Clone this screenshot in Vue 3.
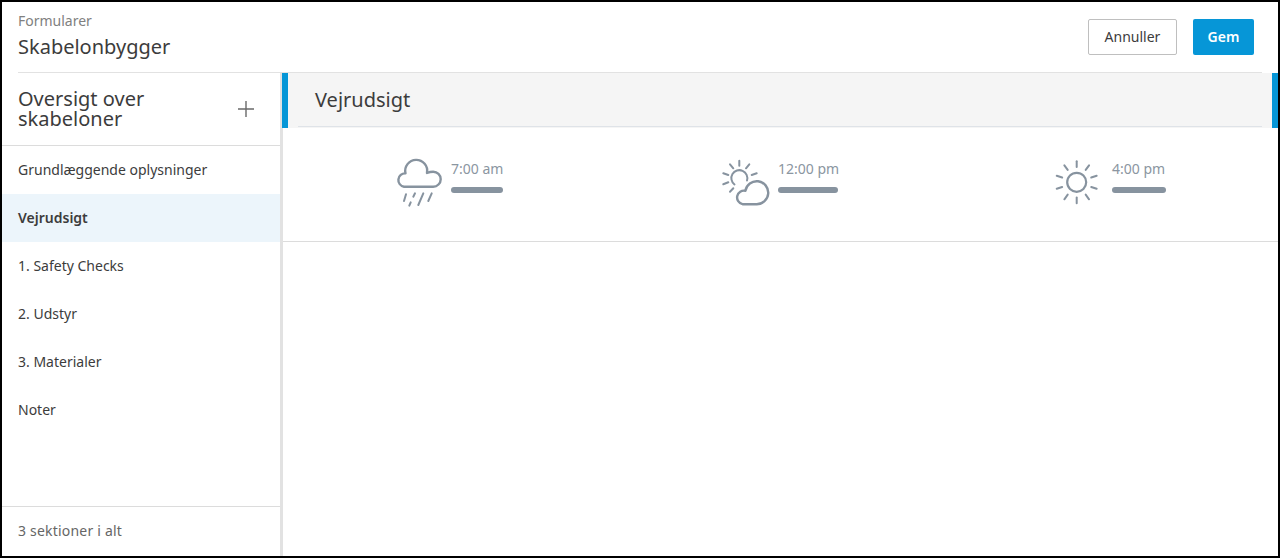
<script setup>
const sections = [
  { name: 'Grundlæggende oplysninger' },
  { name: 'Vejrudsigt', active: true },
  { name: '1. Safety Checks' },
  { name: '2. Udstyr' },
  { name: '3. Materialer' },
  { name: 'Noter' }
]

// ti stråler, 36 grader imellem
const sunRays = [0, 36, 72, 108, 144, 180, 216, 252, 288, 324]
</script>

<template>
  <div class="page">
    <header class="top">
      <div class="titles">
        <div class="crumb">Formularer</div>
        <h1 class="title">Skabelonbygger</h1>
      </div>
      <div class="actions">
        <button class="btn btn-cancel">Annuller</button>
        <button class="btn btn-save">Gem</button>
      </div>
    </header>

    <div class="body">
      <aside class="side">
        <div class="side-head">
          <h2 class="side-title">Oversigt over skabeloner</h2>
          <svg class="plus" viewBox="0 0 16 16" fill="none" stroke="#6a6a6a" stroke-width="1.4">
            <path d="M8 0v16M0 8h16" />
          </svg>
        </div>
        <ul class="side-list">
          <li v-for="s in sections" :key="s.name" class="side-item" :class="{ active: s.active }">{{ s.name }}</li>
        </ul>
        <div class="side-foot">3 sektioner i alt</div>
      </aside>

      <main class="main">
        <section class="card">
          <div class="card-head">
            <div class="card-title">Vejrudsigt</div>
          </div>
          <div class="forecast">
            <div class="slot">
              <svg class="wx" width="48" height="50" viewBox="0 0 48 50" fill="none" stroke="#87939f" stroke-width="2" stroke-linecap="round" stroke-linejoin="round">
                <path d="M9 28.700H38.200A7.500 7.500 0 0 0 38.200 13.700Q35 13.700 32 15A11 11 0 1 0 10.500 15.400A6.700 6.700 0 0 0 9 28.700Z" stroke-width="2.400" />
                <path d="M11 36.300L9 43M20 35.300L18.300 38.700M15.700 44.300L14.300 47.700M28.300 35.300L23.300 47M36.700 35.300L33.300 43" />
              </svg>
              <div class="slot-text">
                <div class="time">7:00 am</div>
                <div class="bar bar-rain"></div>
              </div>
            </div>

            <div class="slot">
              <svg class="wx" width="48" height="50" viewBox="0 0 48 50" fill="none" stroke="#87939f" stroke-width="2" stroke-linecap="round" stroke-linejoin="round">
                <path d="M12.500 26.500A8 8 0 1 1 25 22.500" />
                <path d="M17.300 2.700V7.700M8 6.300L11.300 10.300M27.300 6.300L24 10.300M1.300 15.300L6.300 17M34.700 15.300L29.700 17M1.300 26.300L6.300 24.300M8 33.700L11.300 30.300" />
                <path d="M20.500 46.200H34.500A11.500 11.500 0 1 0 23.400 32.800A6.700 6.700 0 0 0 20.500 46.200Z" stroke-width="2.400" />
              </svg>
              <div class="slot-text">
                <div class="time">12:00 pm</div>
                <div class="bar bar-mixed"></div>
              </div>
            </div>

            <div class="slot">
              <svg class="wx" width="50" height="50" viewBox="0 0 50 50" fill="none" stroke="#87939f" stroke-width="2" stroke-linecap="round">
                <circle cx="22.700" cy="24.300" r="9.500" stroke-width="2.200" />
                <path v-for="r in sunRays" :key="r" d="M22.700 3.300V9" :transform="`rotate(${r} 22.700 24.300)`" />
              </svg>
              <div class="slot-text">
                <div class="time">4:00 pm</div>
                <div class="bar bar-sun"></div>
              </div>
            </div>
          </div>
        </section>
      </main>
    </div>
  </div>
</template>

<style>
html, body {
  margin: 0;
  background: #fff;
}
</style>

<style scoped>
.page {
  box-sizing: border-box;
  width: 1280px;
  height: 558px;
  border: 2px solid #000;
  display: flex;
  flex-direction: column;
  background: #fff;
  font-family: "Noto Sans", "Open Sans", sans-serif;
  color: #3c3c3c;
  overflow: hidden;
}

.top {
  height: 71px;
  margin: 0 16px;
  padding-right: 8px;
  box-sizing: border-box;
  flex-shrink: 0;
  display: flex;
  justify-content: space-between;
  align-items: flex-start;
  border-bottom: 1px solid #e2e2e2;
}

.crumb {
  margin-top: 11px;
  font-size: 14px;
  line-height: 16px;
  color: #808080;
}

.title {
  margin: 5px 0 0;
  font-size: 20px;
  line-height: 26px;
  font-weight: 400;
  color: #3c3c3c;
}

.actions {
  display: flex;
  gap: 16px;
  margin-top: 17px;
}

.btn {
  height: 36px;
  box-sizing: border-box;
  border-radius: 2px;
  font-family: inherit;
  font-size: 14px;
  padding: 0 0 2px;
}

.btn-cancel {
  width: 89px;
  background: #fff;
  border: 1px solid #bfbfbf;
  color: #3c3c3c;
}

.btn-save {
  width: 61px;
  background: #0696d7;
  border: none;
  color: #fff;
  font-weight: 600;
}

.body {
  flex: 1;
  display: flex;
  min-height: 0;
}

.side {
  width: 278px;
  flex-shrink: 0;
  display: flex;
  flex-direction: column;
}

.side-head {
  height: 73px;
  box-sizing: border-box;
  padding: 0 26px 0 16px;
  display: flex;
  align-items: center;
  justify-content: space-between;
  border-bottom: 1px solid #dcdcdc;
}

.side-title {
  margin: 0;
  width: 170px;
  font-size: 20px;
  line-height: 20px;
  font-weight: 400;
  color: #3c3c3c;
}

.plus {
  width: 16px;
  height: 16px;
}

.side-list {
  list-style: none;
  margin: 0;
  padding: 0;
  flex: 1;
}

.side-item {
  height: 48px;
  box-sizing: border-box;
  padding: 0 0 2px 16px;
  display: flex;
  align-items: center;
  font-size: 14px;
  color: #3c3c3c;
}

.side-item.active {
  background: #ecf5fb;
  font-weight: 600;
}

.side-foot {
  height: 50px;
  box-sizing: border-box;
  padding: 0 0 2px 16px;
  display: flex;
  align-items: center;
  border-top: 1px solid #dcdcdc;
  font-size: 14px;
  letter-spacing: 0.2px;
  color: #666;
}

.main {
  flex: 1;
  min-width: 0;
  border-left: 3px solid #e2e2e2;
}

.card {
  height: 169px;
  box-sizing: border-box;
  border-bottom: 1px solid #dcdcdc;
}

.card-head {
  height: 55px;
  box-sizing: border-box;
  margin-left: -1px;
  border-left: 6px solid #0696d7;
  border-right: 6px solid #0696d7;
  background: #f5f5f5;
  padding: 0 10px;
}

.card-title {
  height: 54px;
  box-sizing: border-box;
  padding-left: 17px;
  display: flex;
  align-items: center;
  border-bottom: 1px solid #dfe3e8;
  font-size: 20px;
  color: #3c3c3c;
}

.forecast {
  display: grid;
  grid-template-columns: 327px 332px 1fr;
  padding: 30px 0 0 112px;
}

.slot {
  display: flex;
  align-items: flex-start;
  gap: 8px;
}

.slot-text {
  padding-top: 2px;
}

.time {
  font-size: 14px;
  line-height: 18px;
  color: #8b96a1;
}

.bar {
  height: 6px;
  margin-top: 9px;
  border-radius: 3px;
  background: #87939f;
}

.bar-rain {
  width: 52px;
}

.bar-mixed {
  width: 60px;
}

.bar-sun {
  width: 54px;
}
</style>
